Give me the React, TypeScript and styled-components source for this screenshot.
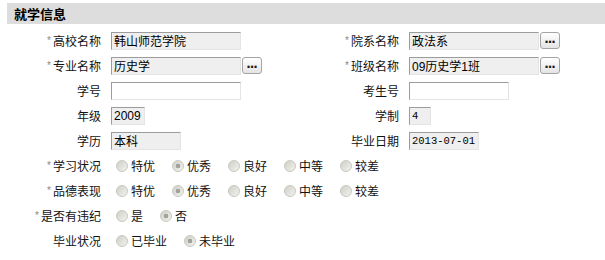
import { Fragment } from 'react'
import styled, { createGlobalStyle } from 'styled-components'

const GlobalStyle = createGlobalStyle`
  body {
    margin: 0;
    background: #fff;
    font-family: "Noto Sans CJK SC", "Liberation Sans", sans-serif;
    font-size: 12px;
    color: #111;
  }
`

const Wrapper = styled.div`
  padding-top: 3px;
  padding-left: 7px;
`

const Header = styled.div`
  height: 21px;
  line-height: 21px;
  padding-left: 7px;
  background: #dddddd;
  font-size: 13px;
  font-weight: 700;
  color: #000;
`

const Form = styled.div`
  display: grid;
  grid-template-columns: 104px 194px 104px 1fr;
  grid-auto-rows: 25px;
  align-items: center;
  margin-top: 4px;
`

const Label = styled.div`
  padding-right: 10px;
  text-align: right;
  white-space: nowrap;
  line-height: 16px;
`

const Star = styled.span`
  color: #888;
  font-size: 10px;
  margin-right: 2px;
  vertical-align: 2px;
  font-family: "Liberation Sans", sans-serif;
`

const Field = styled.div<{ $wide?: boolean }>`
  display: flex;
  align-items: center;
  grid-column: ${(p) => (p.$wide ? '2 / -1' : 'auto')};
`

const TextInput = styled.input<{ $w: number; $mono?: boolean }>`
  box-sizing: border-box;
  width: ${(p) => p.$w}px;
  height: 18px;
  margin: 0;
  padding: 0 2px;
  border: 1px solid;
  border-color: #9c9c9c #e4e4e4 #e4e4e4 #9c9c9c;
  background: ${(p) => (p.readOnly ? '#efefef' : '#fff')};
  color: #000;
  font-family: ${(p) =>
    p.$mono
      ? '"Liberation Mono", "Noto Sans CJK SC", monospace'
      : '"Liberation Sans", "Noto Sans CJK SC", sans-serif'};
  font-size: ${(p) => (p.$mono ? '10.5px' : '12px')};
  outline: none;
`

const PickButton = styled.button`
  box-sizing: border-box;
  width: 20px;
  height: 17px;
  margin-left: 1px;
  padding: 0 0 3px;
  border: 1px solid #a4a4a4;
  border-radius: 3px;
  background: linear-gradient(#ffffff, #e4e4e4);
  color: #1a1a1a;
  font-family: "DejaVu Sans", sans-serif;
  font-size: 12px;
  font-weight: 700;
  line-height: 12px;
  letter-spacing: -1px;
  text-indent: -1px;
`

const RadioGroup = styled.div`
  display: flex;
  align-items: center;
  padding-left: 5px;
`

const Option = styled.label`
  display: flex;
  align-items: center;
  margin-right: 17px;
  white-space: nowrap;
  line-height: 16px;
`

const Radio = styled.input`
  appearance: none;
  box-sizing: border-box;
  width: 12px;
  height: 12px;
  margin: 0 3px 0 0;
  border: 1px solid #c8c8c0;
  border-radius: 50%;
  background: linear-gradient(135deg, #cfcfc7, #f3f3ef);

  &:checked {
    background: radial-gradient(circle, #a2a29c 0 2px, transparent 2.6px),
      linear-gradient(135deg, #cfcfc7, #f3f3ef);
  }
`

type Input = { value: string; w: number; readOnly?: boolean; pick?: boolean; mono?: boolean }
type Cell = { label: string; req?: boolean; input: Input }

const pairs: [Cell, Cell][] = [
  [
    { label: '高校名称', req: true, input: { value: '韩山师范学院', w: 130, readOnly: true } },
    { label: '院系名称', req: true, input: { value: '政法系', w: 130, readOnly: true, pick: true } },
  ],
  [
    { label: '专业名称', req: true, input: { value: '历史学', w: 130, readOnly: true, pick: true } },
    { label: '班级名称', req: true, input: { value: '09历史学1班', w: 130, readOnly: true, pick: true } },
  ],
  [
    { label: '学号', input: { value: '', w: 130 } },
    { label: '考生号', input: { value: '', w: 100 } },
  ],
  [
    { label: '年级', input: { value: '2009', w: 34, readOnly: true } },
    { label: '学制', input: { value: '4', w: 22, readOnly: true, mono: true } },
  ],
  [
    { label: '学历', input: { value: '本科', w: 70, readOnly: true } },
    { label: '毕业日期', input: { value: '2013-07-01', w: 70, readOnly: true, mono: true } },
  ],
]

const grades = ['特优', '优秀', '良好', '中等', '较差']

const radios = [
  { label: '学习状况', req: true, name: 'study', options: grades, checked: 1 },
  { label: '品德表现', req: true, name: 'moral', options: grades, checked: 1 },
  { label: '是否有违纪', req: true, name: 'violation', options: ['是', '否'], checked: 1 },
  { label: '毕业状况', name: 'graduated', options: ['已毕业', '未毕业'], checked: 1 },
]

const FieldLabel = ({ text, req }: { text: string; req?: boolean }) => (
  <Label>
    {req && <Star>*</Star>}
    {text}
  </Label>
)

const InputCell = ({ cell }: { cell: Cell }) => (
  <>
    <FieldLabel text={cell.label} req={cell.req} />
    <Field>
      <TextInput
        type='text'
        value={cell.input.value}
        readOnly={cell.input.readOnly}
        $w={cell.input.w}
        $mono={cell.input.mono}
        onChange={() => {}}
      />
      {cell.input.pick && <PickButton>...</PickButton>}
    </Field>
  </>
)

export default function App() {
  return (
    <>
      <GlobalStyle />
      <Wrapper>
        <Header>就学信息</Header>
        <Form>
          {pairs.map(([left, right]) => (
            <Fragment key={left.label}>
              <InputCell cell={left} />
              <InputCell cell={right} />
            </Fragment>
          ))}
          {radios.map((r) => (
            <Fragment key={r.name}>
              <FieldLabel text={r.label} req={r.req} />
              <Field $wide>
                <RadioGroup>
                  {r.options.map((o, i) => (
                    <Option key={o}>
                      <Radio type='radio' name={r.name} defaultChecked={i === r.checked} />
                      {o}
                    </Option>
                  ))}
                </RadioGroup>
              </Field>
            </Fragment>
          ))}
        </Form>
      </Wrapper>
    </>
  )
}
